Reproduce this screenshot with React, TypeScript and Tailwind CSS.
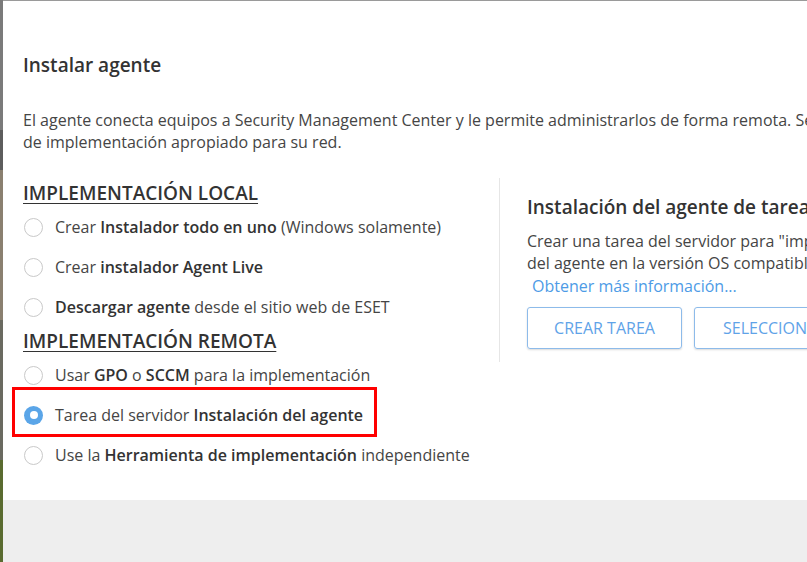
import React from "react";

const font = { fontFamily: '"Open Sans", "Noto Sans", sans-serif' };

function Radio({ checked }: { checked?: boolean }) {
  return checked ? (
    <span className="flex h-[19px] w-[19px] shrink-0 items-center justify-center rounded-full bg-[#5aa5e8]">
      <span className="h-[8px] w-[8px] rounded-full bg-white" />
    </span>
  ) : (
    <span className="h-[19px] w-[19px] shrink-0 rounded-full border border-[#c9c9c9] bg-white" />
  );
}

function Option({ children, checked, className = "" }: { children: React.ReactNode; checked?: boolean; className?: string }) {
  return (
    <div className={`flex h-[40px] items-center gap-[12px] pl-[21px] text-[16px] text-[#454545] whitespace-nowrap ${className}`}>
      <Radio checked={checked} />
      <span>{children}</span>
    </div>
  );
}

const B = ({ children }: { children: React.ReactNode }) => (
  <span className="font-semibold text-[#333]">{children}</span>
);

export default function App() {
  return (
    <div className="flex h-[562px] w-[807px] overflow-hidden bg-[#6f6f6f]" style={font}>
      <div className="flex w-[3px] shrink-0 flex-col">
        <div className="h-[130px] bg-[#7a7a7a]" />
        <div className="h-[40px] bg-[#5d5d5d]" />
        <div className="h-[150px] bg-[#8a8070]" />
        <div className="h-[140px] bg-[#6a6a60]" />
        <div className="flex-1 bg-[#5a6b30]" />
      </div>
      <div className="flex flex-1 flex-col overflow-hidden border-t border-[#9a9a9a] bg-white">
        <div className="h-[499px] shrink-0">
          <div className="pl-[20px] pt-[52px] text-[19px] font-semibold leading-[24px] text-[#333] whitespace-nowrap">
            Instalar agente
          </div>
          <div className="mt-[32px] pl-[20px] text-[16px] leading-[22px] text-[#454545] whitespace-nowrap">
            <div>El agente conecta equipos a Security Management Center y le permite administrarlos de forma remota. Seleccione el método</div>
            <div>de implementación apropiado para su red.</div>
          </div>
          <div className="mt-[28px] flex">
            <div className="w-[496px] shrink-0">
              <div className="pl-[20px] text-[19px] font-semibold leading-[24px] text-[#333] underline underline-offset-[3px] decoration-1 whitespace-nowrap">
                IMPLEMENTACIÓN LOCAL
              </div>
              <Option className="mt-[2px]">
                Crear <B>Instalador todo en uno</B> (Windows solamente)
              </Option>
              <Option>
                Crear <B>instalador Agent Live</B>
              </Option>
              <Option>
                <B>Descargar agente</B> desde el sitio web de ESET
              </Option>
              <div className="mt-[2px] pl-[20px] text-[19px] font-semibold leading-[24px] text-[#333] underline underline-offset-[3px] decoration-1 whitespace-nowrap">
                IMPLEMENTACIÓN REMOTA
              </div>
              <Option className="mt-[2px]">
                Usar <B>GPO</B> o <B>SCCM</B> para la implementación
              </Option>
              <div className="relative">
                <Option checked>
                  Tarea del servidor <B>Instalación del agente</B>
                </Option>
                <div className="pointer-events-none absolute left-[9px] top-[-8px] h-[50px] w-[365px] border-[3px] border-[#ff0000]" />
              </div>
              <Option>
                Use la <B>Herramienta de implementación</B> independiente
              </Option>
            </div>
            <div className="mt-[-3px] h-[184px] w-px shrink-0 bg-[#e6e6e6]" />
            <div className="flex-1 overflow-hidden pl-[27px] pt-[14px] whitespace-nowrap">
              <div className="text-[19px] font-semibold leading-[24px] text-[#333]">
                Instalación del agente de tarea del servidor
              </div>
              <div className="mt-[11px] text-[16px] leading-[22px] text-[#454545]">
                <div>Crear una tarea del servidor para "implementar" la instalación</div>
                <div>del agente en la versión OS compatible.</div>
              </div>
              <div className="pl-[5px] text-[16px] leading-[24px] text-[#4d9be6]">Obtener más información...</div>
              <div className="mt-[9px] flex gap-[12px]">
                <div className="flex h-[42px] w-[155px] shrink-0 items-center justify-center rounded-[3px] border border-[#8dbbea] text-[16px] text-[#5fa3e8] shadow-[0_1px_2px_rgba(0,0,0,0.15)]">
                  CREAR TAREA
                </div>
                <div className="flex h-[42px] shrink-0 items-center rounded-[3px] border border-[#8dbbea] px-[28px] text-[16px] text-[#5fa3e8] shadow-[0_1px_2px_rgba(0,0,0,0.15)]">
                  SELECCIONAR TAREA
                </div>
              </div>
            </div>
          </div>
        </div>
        <div className="flex-1 bg-[#eeeeee]" />
      </div>
    </div>
  );
}
